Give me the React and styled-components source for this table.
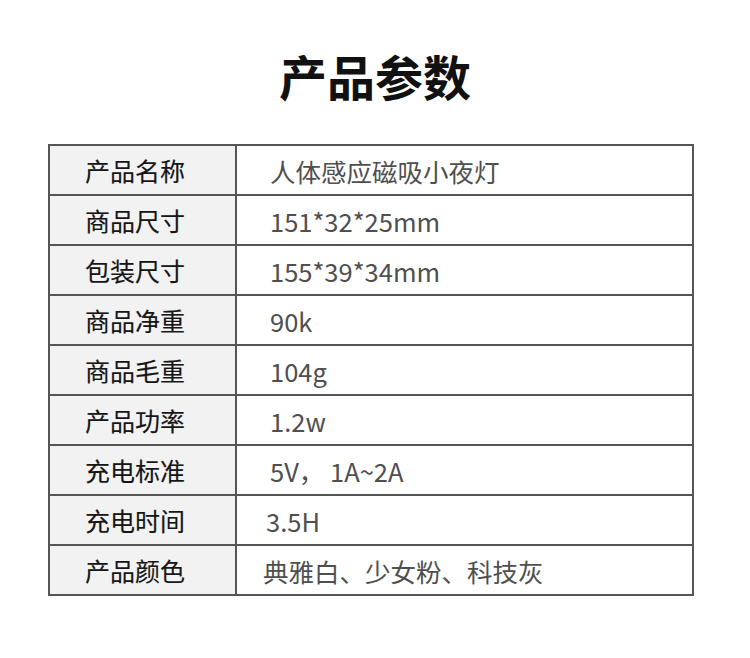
import React from 'react';
import styled, { createGlobalStyle } from 'styled-components';

const rows = [
  ['产品名称', '人体感应磁吸小夜灯'],
  ['商品尺寸', '151*32*25mm'],
  ['包装尺寸', '155*39*34mm'],
  ['商品净重', '90k'],
  ['商品毛重', '104g'],
  ['产品功率', '1.2w'],
  ['充电标准', '5V， 1A~2A'],
  ['充电时间', '3.5H', -4],
  ['产品颜色', '典雅白、少女粉、科技灰', -7],
];

const App = () => {
  return (
    <Page>
      <GlobalStyle />
      <Title>产品参数</Title>
      <Table>
        {rows.map(([label, value, shift]) => (
          <Row key={label}>
            <Label>{label}</Label>
            <Value $shift={shift || 0}>{value}</Value>
          </Row>
        ))}
      </Table>
    </Page>
  );
};

const GlobalStyle = createGlobalStyle`
  body {
    margin: 0;
    background: #fff;
    font-family: "Noto Sans CJK SC", "Noto Sans", sans-serif;
  }
`;

const Page = styled.div`
  width: 750px;
  height: 658px;
  background: #fff;
  padding-top: 51px;
  box-sizing: border-box;
`;

const Title = styled.h1`
  margin: 0;
  height: 93px;
  font-size: 48px;
  line-height: 48px;
  font-weight: 700;
  color: #111;
  text-align: center;
`;

const Table = styled.div`
  width: 646px;
  margin-left: 48px;
  border: 2px solid #555;
  box-sizing: border-box;
`;

const Row = styled.div`
  display: grid;
  grid-template-columns: 187px 1fr;
  height: 50px;
  box-sizing: border-box;
  border-top: 2px solid #555;

  &:first-child {
    height: 48px;
    border-top: none;
  }
`;

const Label = styled.div`
  display: flex;
  align-items: center;
  padding-left: 35px;
  background: #f2f2f2;
  border-right: 2px solid #555;
  font-size: 25px;
  font-weight: 400;
  color: #161616;
  -webkit-text-stroke: 0.15px #161616;
`;

const Value = styled.div`
  display: flex;
  align-items: center;
  padding-left: ${p => 33 + p.$shift}px;
  font-size: 25.5px;
  font-weight: 400;
  color: #4f4f4f;
`;

export default App;
